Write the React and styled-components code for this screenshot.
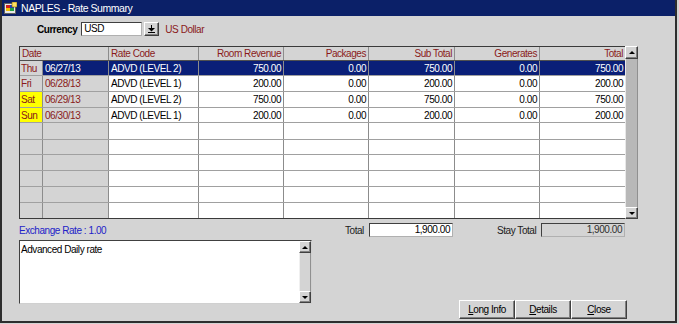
import React from "react";
import styled, { createGlobalStyle } from "styled-components";

const GlobalStyle = createGlobalStyle`
  html, body {
    margin: 0;
    padding: 0;
    background: #d4d4d4;
  }
  body {
    font-family: "Liberation Sans", Arial, sans-serif;
    font-size: 10px;
    letter-spacing: -0.45px;
    color: #000;
  }
`;

const rows = [
  { day: "Thu", date: "06/27/13", code: "ADVD (LEVEL 2)", room: "750.00", pkg: "0.00", sub: "750.00", gen: "0.00", total: "750.00", selected: true },
  { day: "Fri", date: "06/28/13", code: "ADVD (LEVEL 1)", room: "200.00", pkg: "0.00", sub: "200.00", gen: "0.00", total: "200.00" },
  { day: "Sat", date: "06/29/13", code: "ADVD (LEVEL 2)", room: "750.00", pkg: "0.00", sub: "750.00", gen: "0.00", total: "750.00", weekend: true },
  { day: "Sun", date: "06/30/13", code: "ADVD (LEVEL 1)", room: "200.00", pkg: "0.00", sub: "200.00", gen: "0.00", total: "200.00", weekend: true },
  {}, {}, {}, {}, {}, {},
];

const rowHeights = [15, 16, 16, 15, 17, 15, 16, 16, 16, 15];

export default function App() {
  return (
    <>
      <GlobalStyle />
      <Window>
        <TitleBar>
          <TitleIcon />
          <span>NAPLES - Rate Summary</span>
        </TitleBar>
        <Body>
          <CurrencyRow>
            <BoldLabel>Currency</BoldLabel>
            <Input $w={61}>USD</Input>
            <DropButton>
              <svg width="7" height="8" viewBox="0 0 7 8">
                <rect x="3" y="0" width="1" height="3" fill="#000" />
                <polygon points="0,3 7,3 3.5,6.5" fill="#000" />
                <rect x="0" y="7" width="7" height="1" fill="#000" />
              </svg>
            </DropButton>
            <CurrencyName>US Dollar</CurrencyName>
          </CurrencyRow>

          <GridWrap>
            <Grid>
              <HeaderRow>
                <HeadCell $span={2}>Date</HeadCell>
                <HeadCell>Rate Code</HeadCell>
                <HeadCell $right>Room Revenue</HeadCell>
                <HeadCell $right>Packages</HeadCell>
                <HeadCell $right>Sub Total</HeadCell>
                <HeadCell $right>Generates</HeadCell>
                <HeadCell $right $last>Total</HeadCell>
              </HeaderRow>
              {rows.map((r, i) => (
                <Row key={i} $h={rowHeights[i]} $lastRow={i === rows.length - 1}>
                  <DayCell $weekend={r.weekend}>{r.day}</DayCell>
                  <DateCell $selected={r.selected}>{r.date}</DateCell>
                  <Cell $selected={r.selected}>{r.code}</Cell>
                  <Cell $selected={r.selected} $right>{r.room}</Cell>
                  <Cell $selected={r.selected} $right>{r.pkg}</Cell>
                  <Cell $selected={r.selected} $right>{r.sub}</Cell>
                  <Cell $selected={r.selected} $right>{r.gen}</Cell>
                  <Cell $selected={r.selected} $right $last>{r.total}</Cell>
                </Row>
              ))}
            </Grid>
            <ScrollBar $w={13}>
              <ScrollButton $h={13}><Arrow $up /></ScrollButton>
              <ScrollTrack $dark />
              <ScrollButton $h={12}><Arrow /></ScrollButton>
            </ScrollBar>
          </GridWrap>

          <InfoRow>
            <ExchangeRate>Exchange Rate : 1.00</ExchangeRate>
            <FieldLabel $w={24}>Total</FieldLabel>
            <Input $w={84} $right>1,900.00</Input>
            <FieldLabel $w={44} $ml={44}>Stay Total</FieldLabel>
            <Input $w={84} $right $disabled>1,900.00</Input>
          </InfoRow>

          <BottomRow>
            <Notes>
              <NotesText>Advanced Daily rate</NotesText>
              <ScrollBar $w={12}>
                <ScrollButton $h={12}><Arrow $up /></ScrollButton>
                <ScrollTrack />
                <ScrollButton $h={12}><Arrow /></ScrollButton>
              </ScrollBar>
            </Notes>
            <ButtonBar>
              <Button><u>L</u>ong Info</Button>
              <Button><u>D</u>etails</Button>
              <Button><u>C</u>lose</Button>
            </ButtonBar>
          </BottomRow>
        </Body>
      </Window>
    </>
  );
}

function TitleIcon() {
  return (
    <svg width="13" height="13" viewBox="0 0 13 13">
      <rect x="0.5" y="1.5" width="11" height="10" fill="#e8e8e8" stroke="#606060" />
      <rect x="2" y="3" width="4" height="3" fill="#d02020" />
      <rect x="6" y="3" width="4" height="3" fill="#2040c0" />
      <rect x="2" y="6" width="4" height="3" fill="#f0c000" />
      <rect x="6" y="6" width="4" height="3" fill="#20a040" />
      <rect x="8" y="0" width="5" height="5" fill="#ffe060" stroke="#806000" strokeWidth="0.6" />
    </svg>
  );
}

const Window = styled.div`
  width: 677px;
  height: 323px;
  box-sizing: border-box;
  display: flex;
  flex-direction: column;
  background: #d4d4d4;
  border-style: solid;
  border-color: #2e2e2e;
  border-width: 0 2px 2px 2px;
`;

const TitleBar = styled.div`
  height: 16px;
  flex: 0 0 16px;
  display: flex;
  align-items: center;
  gap: 4px;
  padding-left: 2px;
  background: #0b2068;
  color: #fff;
  font-size: 10.5px;
`;

const Body = styled.div`
  flex: 1;
  display: flex;
  flex-direction: column;
  padding: 6px 0 0 17px;
`;

const CurrencyRow = styled.div`
  display: flex;
  align-items: center;
  height: 14px;
  padding-left: 18px;
`;

const BoldLabel = styled.span`
  font-weight: bold;
  margin-right: 4px;
`;

const Input = styled.div`
  width: ${(p) => p.$w}px;
  height: 14px;
  box-sizing: border-box;
  border: 1px solid #404040;
  border-right-color: #b0b0b0;
  border-bottom-color: #b0b0b0;
  background: ${(p) => (p.$disabled ? "#d4d4d4" : "#fff")};
  color: ${(p) => (p.$disabled ? "#303030" : "#000")};
  display: flex;
  align-items: center;
  justify-content: ${(p) => (p.$right ? "flex-end" : "flex-start")};
  padding: 0 2px;
  line-height: 12px;
  white-space: nowrap;
`;

const DropButton = styled.div`
  width: 15px;
  height: 14px;
  margin-left: 2px;
  box-sizing: border-box;
  display: flex;
  align-items: center;
  justify-content: center;
  background: #d4d4d4;
  border: 1px solid;
  border-color: #fff #404040 #404040 #fff;
  box-shadow: inset -1px -1px 0 #808080;
`;

const CurrencyName = styled.span`
  margin-left: 6px;
  color: #8a1a1a;
`;

const GridWrap = styled.div`
  display: flex;
  margin-top: 10px;
`;

const Grid = styled.div`
  width: 606px;
  box-sizing: border-box;
  border: 1px solid #3a3a3a;
  border-right: none;
  background: #fff;
`;

const columns = "23px 66px 90px 85px 85px 86px 85px 85px";

const HeaderRow = styled.div`
  display: grid;
  grid-template-columns: ${columns};
  height: 14px;
  box-sizing: border-box;
  border-bottom: 1px solid #505050;
  background: #d4d4d4;
`;

const HeadCell = styled.div`
  grid-column: span ${(p) => p.$span || 1};
  box-sizing: border-box;
  border-right: ${(p) => (p.$last ? "none" : "1px solid #8c8c8c")};
  color: #8a1a1a;
  text-align: ${(p) => (p.$right ? "right" : "left")};
  padding: 0 2px;
  line-height: 13px;
  white-space: nowrap;
  overflow: hidden;
`;

const Row = styled.div`
  display: grid;
  grid-template-columns: ${columns};
  height: ${(p) => p.$h}px;
  box-sizing: border-box;
  border-bottom: ${(p) => (p.$lastRow ? "none" : "1px solid #a0a0a0")};
`;

const Cell = styled.div`
  box-sizing: border-box;
  border-right: ${(p) => (p.$last ? "none" : "1px solid #8c8c8c")};
  background: ${(p) => (p.$selected ? "#0a1f78" : "#fff")};
  color: ${(p) => (p.$selected ? "#fff" : "#000")};
  text-align: ${(p) => (p.$right ? "right" : "left")};
  padding: 0 2px;
  display: flex;
  align-items: center;
  justify-content: ${(p) => (p.$right ? "flex-end" : "flex-start")};
  white-space: nowrap;
  overflow: hidden;
`;

const DayCell = styled(Cell)`
  background: ${(p) => (p.$weekend ? "#ffff00" : "#d4d4d4")};
  color: #8a1a1a;
  padding-left: 1px;
`;

const DateCell = styled(Cell)`
  background: ${(p) => (p.$selected ? "#0a1f78" : "#d4d4d4")};
  color: ${(p) => (p.$selected ? "#fff" : "#8a1a1a")};
`;

const ScrollBar = styled.div`
  width: ${(p) => p.$w}px;
  flex: 0 0 ${(p) => p.$w}px;
  display: flex;
  flex-direction: column;
  box-sizing: border-box;
`;

const ScrollButton = styled.div`
  height: ${(p) => p.$h}px;
  flex: 0 0 ${(p) => p.$h}px;
  box-sizing: border-box;
  display: flex;
  align-items: center;
  justify-content: center;
  background: #d4d4d4;
  border: 1px solid;
  border-color: #fff #404040 #404040 #fff;
  box-shadow: inset -1px -1px 0 #808080;
`;

const ScrollTrack = styled.div`
  flex: 1;
  background: ${(p) => (p.$dark ? "#b8b8b8" : "#d4d4d4")};
  border-left: 1px solid ${(p) => (p.$dark ? "#e8e8e8" : "#f0f0f0")};
  border-right: 1px solid #909090;
`;

const Arrow = styled.span`
  width: 0;
  height: 0;
  border-left: 3px solid transparent;
  border-right: 3px solid transparent;
  ${(p) => (p.$up ? "border-bottom: 3px solid #000;" : "border-top: 3px solid #000;")}
`;

const InfoRow = styled.div`
  display: flex;
  align-items: center;
  height: 14px;
  margin-top: 4px;
  white-space: nowrap;
`;

const ExchangeRate = styled.span`
  width: 326px;
  color: #2222c8;
`;

const FieldLabel = styled.span`
  width: ${(p) => p.$w}px;
  margin-left: ${(p) => p.$ml || 0}px;
  color: #202020;
`;

const BottomRow = styled.div`
  display: flex;
  align-items: flex-start;
  margin-top: 3px;
`;

const Notes = styled.div`
  width: 293px;
  height: 64px;
  box-sizing: border-box;
  display: flex;
  background: #fff;
  border: 1px solid #404040;
  border-right-color: #d0d0d0;
  border-bottom-color: #d0d0d0;
`;

const NotesText = styled.div`
  flex: 1;
  padding: 3px 1px;
`;

const ButtonBar = styled.div`
  display: flex;
  margin-top: 60px;
  margin-left: 147px;
`;

const Button = styled.button`
  width: 56px;
  height: 19px;
  box-sizing: border-box;
  font-family: inherit;
  font-size: 10px;
  letter-spacing: -0.45px;
  color: #000;
  background: #d4d4d4;
  border: 1px solid;
  border-color: #fff #404040 #404040 #fff;
  box-shadow: inset -1px -1px 0 #808080;
  padding: 0;
`;
